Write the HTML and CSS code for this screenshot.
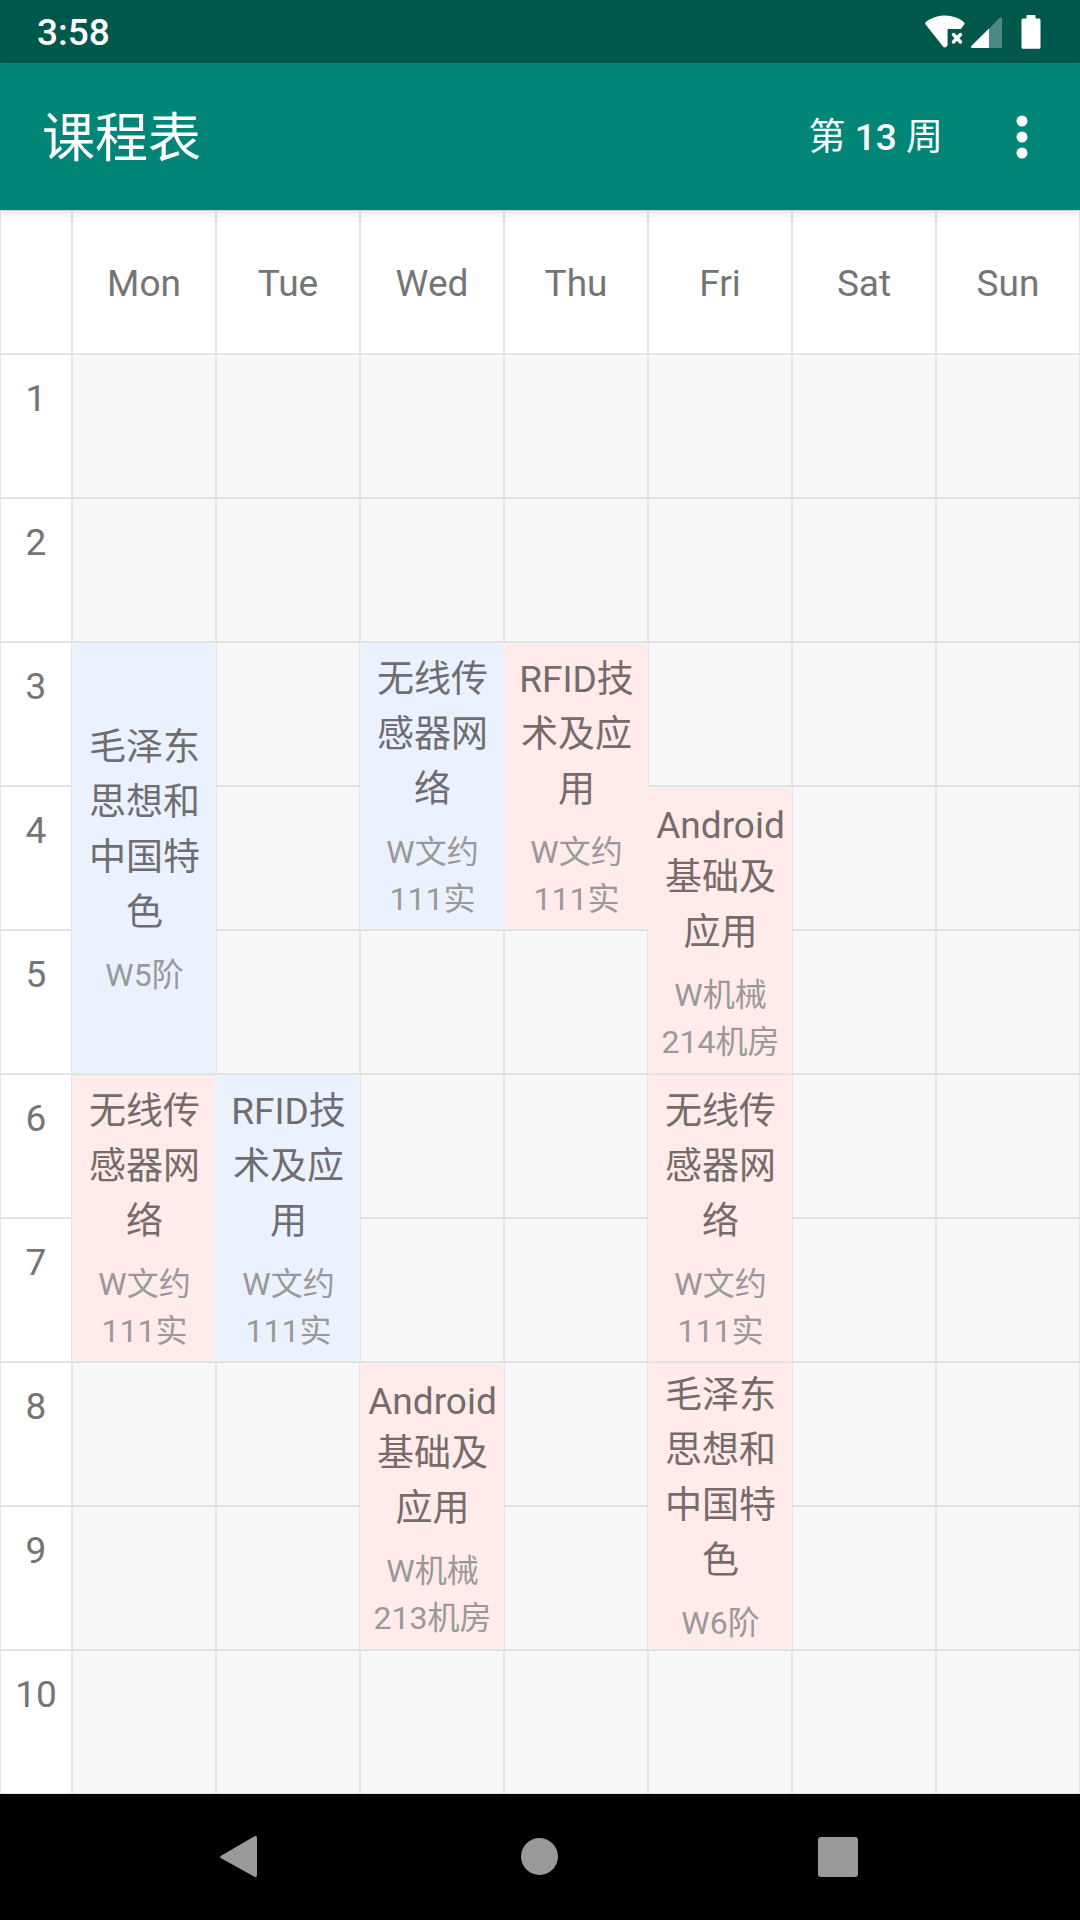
FILE: index.html
```html
<!DOCTYPE html>
<html lang="zh-CN">
<head>
<meta charset="utf-8">
<meta name="viewport" content="width=device-width, initial-scale=1">
<title>课程表</title>
<link rel="stylesheet" href="styles.css">
</head>
<body>
<div class="status-bar">
  <time class="clock">3:58</time>
  <div class="status-icons">
    <svg width="40" height="34" viewBox="0 0 40 34" aria-hidden="true">
      <path fill="#fff" d="M0.6 9.4C-.1 8.500 0 7.600 .8 7 6.300 3.100 12.700.6 20 .6s13.500 2.300 18.600 6.200c1.100.8 1.200 1.800.5 2.800L36 14H22.600v16.300L21.600 31.600c-1 1.200-2.600 1.200-3.600 0z"/>
      <path stroke="#fff" stroke-width="3.500" stroke-linecap="round" d="M28.500 19.500l7 7.500M35.500 19.500l-7 7.500"/>
    </svg>
    <svg width="31" height="34" viewBox="0 0 31 34" aria-hidden="true">
      <path fill="#fff" fill-opacity=".3" d="M18 14L28 3.200c1.500-1.500 3-1 3 1V31.500q0 1.500-1.500 1.500H18z"/>
      <path fill="#fff" d="M18 13.500V33H1.500C0 33-.4 31.800.5 30.800z"/>
    </svg>
    <svg class="battery" width="20" height="34" viewBox="0 0 20 34" aria-hidden="true">
      <path fill="#fff" d="M5.500 0h9v3.500H18q1.500 0 1.500 1.500V32.300q0 1.500-1.500 1.500H2Q.5 33.800.5 32.300V5Q.5 3.500 2 3.500h3.500z"/>
    </svg>
  </div>
</div>

<header class="app-bar">
  <h1 class="app-title">课程表</h1>
  <button class="week-button" type="button">第 <span class="week-number">13</span> 周</button>
  <button class="menu-button" type="button" aria-label="更多选项">
    <svg width="12" height="44" viewBox="0 0 12 44" aria-hidden="true">
      <g fill="#fff"><circle cx="6" cy="6" r="5.500"/><circle cx="6" cy="22" r="5.500"/><circle cx="6" cy="38" r="5.500"/></g>
    </svg>
  </button>
</header>

<main>
<table class="timetable">
  <thead>
    <tr><td></td><th scope="col">Mon</th><th scope="col">Tue</th><th scope="col">Wed</th><th scope="col">Thu</th><th scope="col">Fri</th><th scope="col">Sat</th><th scope="col">Sun</th></tr>
  </thead>
  <tbody>
    <tr><th scope="row">1</th><td></td><td></td><td></td><td></td><td></td><td></td><td></td></tr>
    <tr><th scope="row">2</th><td></td><td></td><td></td><td></td><td></td><td></td><td></td></tr>
    <tr>
      <th scope="row">3</th>
      <td class="course blue" rowspan="3"><div class="name">毛泽东思想和中国特色</div><div class="room">W5阶</div></td>
      <td></td>
      <td class="course blue" rowspan="2"><div class="name">无线传感器网络</div><div class="room">W文约111实</div></td>
      <td class="course red" rowspan="2"><div class="name">RFID技术及应用</div><div class="room">W文约111实</div></td>
      <td></td><td></td><td></td>
    </tr>
    <tr>
      <th scope="row">4</th>
      <td></td>
      <td class="course red" rowspan="2"><div class="name"><span class="latin">Android</span>基础及应用</div><div class="room">W机械214机房</div></td>
      <td></td><td></td>
    </tr>
    <tr><th scope="row">5</th><td></td><td></td><td></td><td></td><td></td></tr>
    <tr>
      <th scope="row">6</th>
      <td class="course red" rowspan="2"><div class="name">无线传感器网络</div><div class="room">W文约111实</div></td>
      <td class="course blue" rowspan="2"><div class="name">RFID技术及应用</div><div class="room">W文约111实</div></td>
      <td></td><td></td>
      <td class="course red" rowspan="2"><div class="name">无线传感器网络</div><div class="room">W文约111实</div></td>
      <td></td><td></td>
    </tr>
    <tr><th scope="row">7</th><td></td><td></td><td></td><td></td></tr>
    <tr>
      <th scope="row">8</th>
      <td></td><td></td>
      <td class="course red" rowspan="2"><div class="name"><span class="latin">Android</span>基础及应用</div><div class="room">W机械213机房</div></td>
      <td></td>
      <td class="course red" rowspan="2"><div class="name">毛泽东思想和中国特色</div><div class="room">W6阶</div></td>
      <td></td><td></td>
    </tr>
    <tr><th scope="row">9</th><td></td><td></td><td></td><td></td><td></td></tr>
    <tr><th scope="row">10</th><td></td><td></td><td></td><td></td><td></td><td></td><td></td></tr>
  </tbody>
</table>
</main>

<nav class="nav-bar" aria-label="系统导航">
  <button type="button" aria-label="返回">
    <svg width="44" height="44" viewBox="0 0 44 44" aria-hidden="true"><path fill="#999" d="M2.500 20.500L35 1.500Q38 0 38 3V40q0 3-3 1.500L2.500 23.500Q-.5 22 2.500 20.500z"/></svg>
  </button>
  <button type="button" aria-label="主屏幕">
    <svg width="44" height="44" viewBox="0 0 44 44" aria-hidden="true"><circle cx="21.500" cy="21.500" r="18.500" fill="#999"/></svg>
  </button>
  <button type="button" aria-label="最近任务">
    <svg width="44" height="44" viewBox="0 0 44 44" aria-hidden="true"><rect x="1" y="2" width="40" height="40" rx="3" fill="#999"/></svg>
  </button>
</nav>
</body>
</html>
```
FILE: styles.css
```css
* {
  box-sizing: border-box;
}

body {
  margin: 0;
  min-height: 100vh;
  display: flex;
  flex-direction: column;
  background: #f8f8f8;
  color: #757575;
  font-family: Roboto, "Noto Sans CJK SC", sans-serif;
  font-size: 37px;
  line-height: 55px;
}

button {
  border: 0;
  padding: 0;
  background: none;
  color: inherit;
  font: inherit;
  cursor: pointer;
}

svg {
  display: block;
}

.status-bar {
  display: flex;
  align-items: center;
  justify-content: space-between;
  height: 63px;
  padding: 0 39px 0 37px;
  background: #00574b;
  color: #fff;
}

.clock {
  padding-top: 2px;
  font-weight: 500;
}

.status-icons {
  display: flex;
  gap: 6px;
}

.battery {
  margin-left: 13px;
}

.app-bar {
  position: relative;
  display: flex;
  align-items: center;
  height: 147px;
  padding: 0 34px 0 42px;
  background: #008577;
  color: #fff;
  box-shadow: 0 2px 10px rgba(0, 0, 0, 0.15);
}

.app-title {
  flex: 1;
  margin: 0;
  padding-top: 5px;
  font-size: 53px;
  font-weight: 400;
}

.week-button {
  padding-top: 1px;
}

.week-number {
  font-weight: 500;
}

.menu-button {
  display: flex;
  justify-content: center;
  width: 48px;
  margin-left: 55px;
}

.timetable {
  width: 100%;
  table-layout: fixed;
  border-collapse: separate;
  border-spacing: 0;
  text-align: center;
}

.timetable th,
.timetable td {
  height: 144px;
  padding: 0;
  border: 1px solid #e4e4e4;
  font-weight: 400;
}

.timetable thead td {
  width: 6.6667%;
}

.timetable thead td,
.timetable th {
  background: #fff;
}

.timetable thead th {
  padding-top: 2px;
}

.timetable tbody th {
  padding-top: 16px;
  vertical-align: top;
}

.timetable .course {
  padding: 2px 5px 0 6px;
  border-width: 1px 0;
  vertical-align: middle;
}

.blue {
  background: #ebf2ff;
}

.red {
  background: #ffebe9;
}

.name {
  color: #6e6e72;
}

.red .name {
  color: #756b69;
}

.latin {
  display: block;
  padding-top: 4px;
  line-height: 49px;
}

.room {
  margin-top: 12px;
  padding: 0 4px;
  color: #999;
  font-size: 32px;
  line-height: 47px;
}

.nav-bar {
  flex: 1;
  display: flex;
  align-items: center;
  justify-content: center;
  gap: 17%;
  min-height: 126px;
  background: #000;
}

.nav-bar button {
  display: flex;
  justify-content: center;
  width: 115px;
}
```
